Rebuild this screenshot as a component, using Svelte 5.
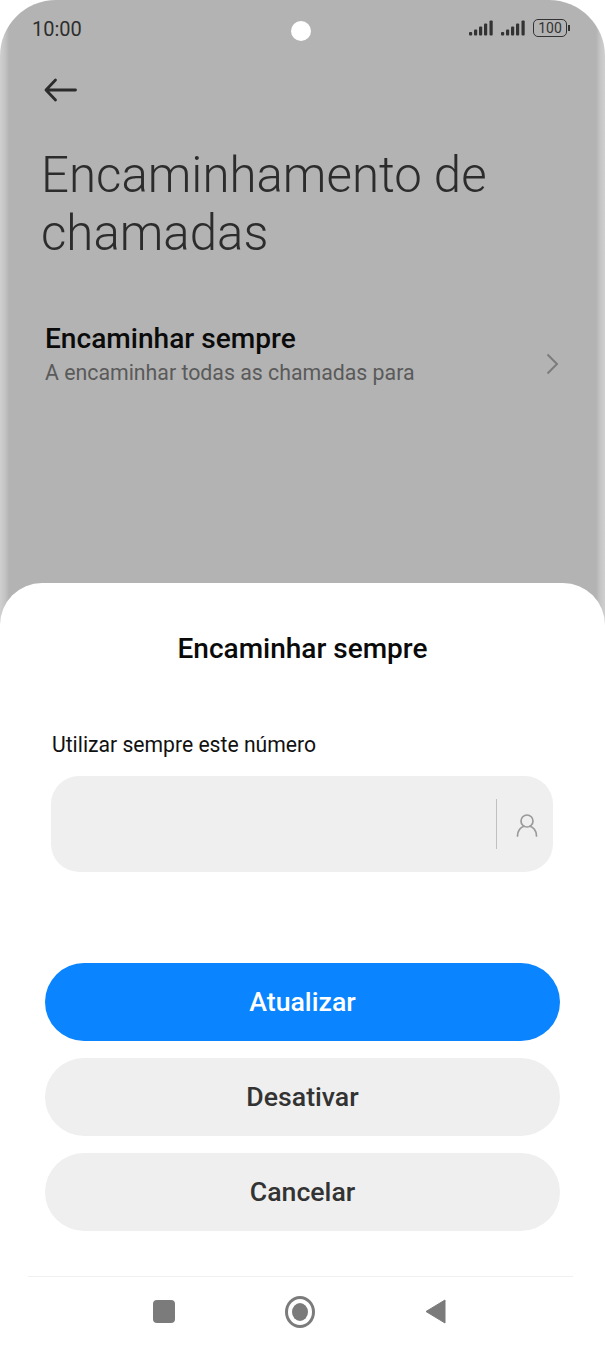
<script>
  const signals = [0, 1];
</script>

<div class="phone">
  <div class="screen">
    <header class="status">
      <span class="time">10:00</span>
      <span class="camera"></span>
      <div class="indicators">
        {#each signals as s}
          <svg class="signal" width="24" height="16" viewBox="0 0 24 16" fill="#333">
            <rect x="0" y="12" width="3.200" height="3.500" rx="1" />
            <rect x="5" y="9.500" width="3.200" height="6" rx="1" />
            <rect x="10" y="6.500" width="3.200" height="9" rx="1" />
            <rect x="15" y="3.500" width="3.200" height="12" rx="1" />
            <rect x="20.500" y="0.500" width="3.200" height="15" rx="1" />
          </svg>
        {/each}
        <div class="battery"><span class="level">100</span></div>
        <span class="nub"></span>
      </div>
    </header>

    <button class="back" aria-label="Voltar">
      <svg width="34" height="24" viewBox="0 0 34 24" fill="none" stroke="#2b2b2b" stroke-width="2.800" stroke-linecap="round" stroke-linejoin="round">
        <path d="M3 12H32.500M12.500 2 3 12l9.500 10" />
      </svg>
    </button>

    <h1>Encaminhamento de chamadas</h1>

    <div class="row">
      <div class="row-text">
        <div class="row-title">Encaminhar sempre</div>
        <div class="row-sub">A encaminhar todas as chamadas para</div>
      </div>
      <svg class="chev" width="13" height="22" viewBox="0 0 13 22" fill="none" stroke="#7c7c7c" stroke-width="2">
        <path d="M1.500 1.500l9.500 9.500-9.500 9.500" />
      </svg>
    </div>
  </div>

  <section class="sheet">
    <h2>Encaminhar sempre</h2>
    <label class="field-label" for="num">Utilizar sempre este número</label>
    <div class="field">
      <input id="num" type="text" />
      <span class="divider"></span>
      <svg class="person" width="22" height="24" viewBox="0 0 22 24" fill="none" stroke="#9a9a9a" stroke-width="1.700">
        <circle cx="11" cy="8" r="6" />
        <path d="M1.500 23c0-5.500 3.500-9 6.500-9.800M20.500 23c0-5.500-3.500-9-6.500-9.800" stroke-linecap="round" />
      </svg>
    </div>
    <div class="actions">
      <button class="btn primary">Atualizar</button>
      <button class="btn">Desativar</button>
      <button class="btn">Cancelar</button>
    </div>
    <nav class="nav">
      <span class="nav-square"></span>
      <span class="nav-home"><span></span></span>
      <svg width="21" height="25" viewBox="0 0 21 25"><path d="M20 1v23L1 12.500z" fill="#7b7b7b" stroke="#7b7b7b" stroke-linejoin="round" /></svg>
    </nav>
  </section>
</div>

<style>
  :global(body) {
    margin: 0;
    background: #fff;
    font-family: Roboto, "Liberation Sans", sans-serif;
  }
  .phone {
    position: relative;
    width: 605px;
    height: 1346px;
    overflow: hidden;
    background: #fff;
  }
  .screen {
    height: 700px;
    box-sizing: border-box;
    border-radius: 56px 56px 0 0;
    background: linear-gradient(90deg, #cfcfcf 0, #c4c4c4 5px, #b3b3b3 9px, #b3b3b3 596px, #c4c4c4 600px, #cfcfcf 605px);
    padding-top: 17px;
  }
  .status {
    display: flex;
    align-items: center;
    height: 24px;
    padding: 0 35px 0 32px;
    position: relative;
  }
  .time {
    font-size: 20px;
    color: #2e2e2e;
  }
  .camera {
    position: absolute;
    left: 291px;
    top: 4px;
    width: 20px;
    height: 20px;
    border-radius: 50%;
    background: #fff;
  }
  .indicators {
    margin-left: auto;
    display: flex;
    align-items: center;
    gap: 8px;
  }
  .signal { margin-top: -2px; }
  .battery {
    box-sizing: border-box;
    width: 34px;
    height: 18px;
    border: 1.500px solid #333;
    border-radius: 5px;
    display: flex;
    align-items: center;
    justify-content: center;
    margin-top: -3px;
  }
  .level {
    font-size: 14px;
    color: #333;
    line-height: 1;
  }
  .nub {
    width: 2px;
    height: 6px;
    margin-left: -7px;
    margin-top: -3px;
    background: #333;
  }
  .back {
    display: block;
    margin: 37px 0 0 43px;
    padding: 0;
    border: 0;
    background: none;
    height: 24px;
    line-height: 0;
  }
  h1 {
    margin: 44px 0 0 41px;
    width: 500px;
    font-size: 49.200px;
    font-weight: 300;
    line-height: 58px;
    color: #2c2c2c;
  }
  .row {
    margin-top: 61px;
    padding: 0 46px 0 45px;
    display: flex;
    align-items: center;
    justify-content: space-between;
  }
  .row-title {
    font-size: 28.100px;
    font-weight: 500;
    line-height: 32px;
    color: #0b0b0b;
  }
  .row-sub {
    margin-top: 5px;
    font-size: 21.300px;
    line-height: 26px;
    color: #5a5a5a;
  }
  .chev { margin-top: 19px; }
  .sheet {
    position: absolute;
    left: 0;
    right: 0;
    top: 583px;
    bottom: 0;
    background: #fff;
    border-radius: 42px 42px 0 0;
    display: flex;
    flex-direction: column;
  }
  h2 {
    margin: 49px 0 0;
    text-align: center;
    font-size: 28px;
    font-weight: 500;
    line-height: 34px;
    color: #0a0a0a;
  }
  .field-label {
    margin: 66px 0 0 52px;
    font-size: 21.150px;
    line-height: 26px;
    color: #111;
  }
  .field {
    margin: 18px 52px 0 51px;
    height: 96px;
    border-radius: 28px;
    background: #efefef;
    display: flex;
    align-items: center;
    padding-right: 15px;
  }
  .field input {
    flex: 1;
    min-width: 0;
    border: 0;
    background: none;
    outline: none;
  }
  .divider {
    width: 1px;
    height: 50px;
    background: #c0c0c0;
    margin-right: 19px;
  }
  .person { margin-top: 2px; }
  .actions {
    margin: 91px 45px 0;
    display: flex;
    flex-direction: column;
    gap: 17px;
  }
  .btn {
    height: 78px;
    border: 0;
    border-radius: 39px;
    background: #efefef;
    color: #333;
    font-family: inherit;
    font-size: 26.700px;
    font-weight: 500;
    padding: 0;
  }
  .btn.primary {
    background: #0a84ff;
    color: #fff;
  }
  .nav {
    margin: 45px 32px 0 28px;
    height: 69px;
    border-top: 1px solid #f0f0f0;
    display: flex;
    align-items: center;
    justify-content: space-between;
    padding: 0 127px 0 125px;
  }
  .nav-square {
    width: 22px;
    height: 23px;
    border-radius: 4px;
    background: #7b7b7b;
  }
  .nav-home {
    box-sizing: border-box;
    width: 30px;
    height: 32px;
    border: 3px solid #7b7b7b;
    border-radius: 50%;
    display: flex;
    align-items: center;
    justify-content: center;
  }
  .nav-home span {
    width: 16px;
    height: 18px;
    border-radius: 50%;
    background: #7b7b7b;
  }
</style>
